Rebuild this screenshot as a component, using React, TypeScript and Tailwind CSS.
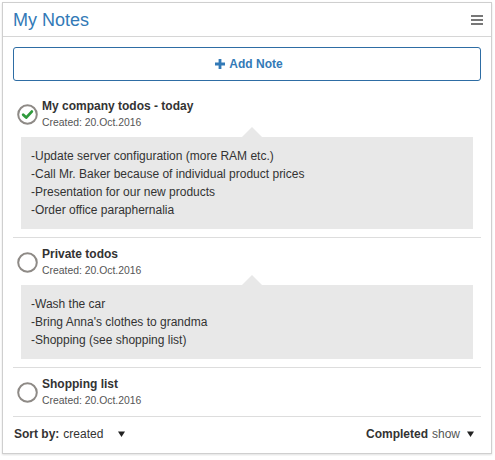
import React from 'react';

type Note = {
  title: string;
  created: string;
  done: boolean;
  lines: string[];
};

const notes: Note[] = [
  {
    title: 'My company todos - today',
    created: '20.Oct.2016',
    done: true,
    lines: [
      '-Update server configuration (more RAM etc.)',
      '-Call Mr. Baker because of individual product prices',
      '-Presentation for our new products',
      '-Order office paraphernalia',
    ],
  },
  {
    title: 'Private todos',
    created: '20.Oct.2016',
    done: false,
    lines: ['-Wash the car', "-Bring Anna's clothes to grandma", '-Shopping (see shopping list)'],
  },
  {
    title: 'Shopping list',
    created: '20.Oct.2016',
    done: false,
    lines: [],
  },
];

const CheckCircle: React.FC<{ checked: boolean }> = ({ checked }) => (
  <svg width="21" height="21" viewBox="0 0 21 21" className="shrink-0">
    <circle cx="10.5" cy="10.5" r="9.3" fill="white" stroke="#8e8a86" strokeWidth="2" />
    {checked && (
      <path d="M6.2 10.8 L9.2 13.6 L14.8 7.6" fill="none" stroke="#2f9a3c" strokeWidth="2.8" strokeLinecap="round" strokeLinejoin="round" />
    )}
  </svg>
);

const Caret: React.FC = () => (
  <svg width="7" height="6" viewBox="0 0 7 6" className="inline-block">
    <path d="M0 0.5 L7 0.5 L3.5 6 Z" fill="#222" />
  </svg>
);

const NoteItem: React.FC<{ note: Note }> = ({ note }) => (
  <div className="border-b border-[#dddddd] pt-[8px] pb-[8px]">
    <div className="flex items-center pl-[4px]">
      <CheckCircle checked={note.done} />
      <div className="ml-[4px]">
        <div className="text-[12px] leading-[16px] font-bold text-[#333333]">{note.title}</div>
        <div className="mt-[2px] text-[10.4px] leading-[14px] text-[#555555]">Created: {note.created}</div>
      </div>
    </div>
    {note.lines.length > 0 && (
      <div className="relative mt-[7px] ml-[8px] mr-[8px] bg-[#e8e8e8] px-[10px] py-[10px]">
        <div className="absolute left-[221px] top-[-10px] h-0 w-0 border-l-[10px] border-r-[10px] border-b-[10px] border-l-transparent border-r-transparent border-b-[#e8e8e8]" />
        {note.lines.map((line) => (
          <div key={line} className="text-[12px] leading-[18px] text-[#333333]">
            {line}
          </div>
        ))}
      </div>
    )}
  </div>
);

const App: React.FC = () => {
  return (
    <div className="p-[2px] font-['Liberation_Sans',Arial,sans-serif]">
      <div className="w-[490px] border border-[#cfcfcf] bg-white shadow-[0_1px_2px_rgba(0,0,0,0.12)]">
        <div className="flex h-[34px] items-center justify-between border-b border-[#d6d6d6] pl-[10px] pr-[8px]">
          <h1 className="text-[18px] leading-[22px] text-[#337ab7]">My Notes</h1>
          <div className="flex w-[12px] flex-col gap-[2px]">
            <span className="h-[2px] bg-[#777777]" />
            <span className="h-[2px] bg-[#777777]" />
            <span className="h-[2px] bg-[#777777]" />
          </div>
        </div>

        <div className="px-[10px] pt-[10px]">
          <button className="flex h-[34px] w-full items-center justify-center gap-[4px] rounded-[3px] border border-[#2e6da4] bg-white pl-[4px] text-[12px] font-bold text-[#337ab7]">
            <svg width="10" height="10" viewBox="0 0 10 10">
              <path d="M3.6 0 H6.4 V3.6 H10 V6.4 H6.4 V10 H3.6 V6.4 H0 V3.6 H3.6 Z" fill="#337ab7" />
            </svg>
            Add Note
          </button>

          <div className="mt-[9px]">
            {notes.map((note) => (
              <NoteItem key={note.title} note={note} />
            ))}
          </div>

          <div className="flex items-center justify-between pl-[1px] pt-[9px] pb-[11px] text-[12px] leading-[16px] text-[#333333]">
            <div className="flex items-center">
              <span className="font-bold">Sort by:</span>
              <span className="ml-[4px]">created</span>
              <span className="ml-[15px] flex items-center"><Caret /></span>
            </div>
            <div className="mr-[7px] flex items-center">
              <span className="font-bold">Completed</span>
              <span className="ml-[4px] text-[#555555]">show</span>
              <span className="ml-[7px] flex items-center"><Caret /></span>
            </div>
          </div>
        </div>
      </div>
    </div>
  );
};

export default App;
